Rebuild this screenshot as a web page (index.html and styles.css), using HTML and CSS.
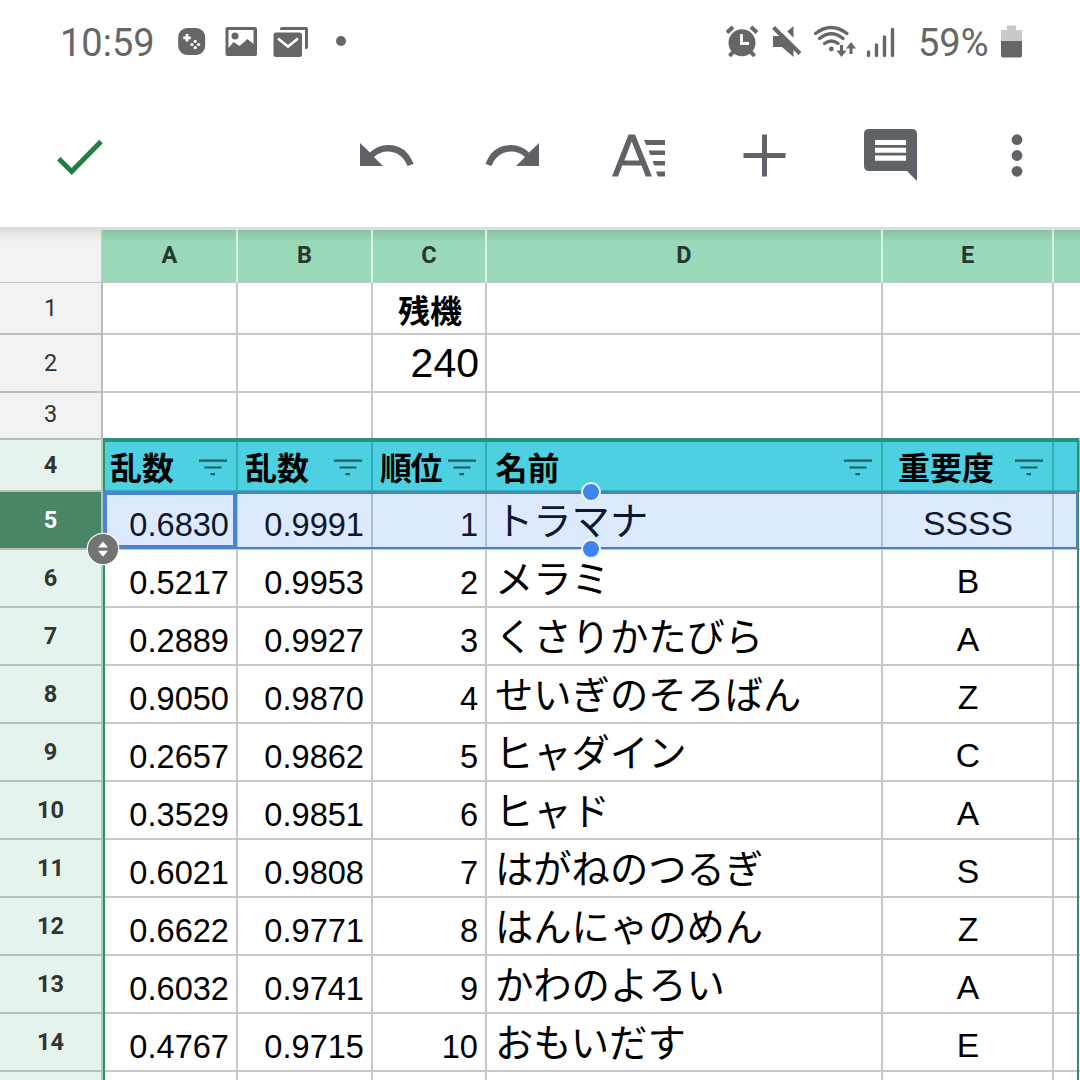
FILE: index.html
```html
<!DOCTYPE html>
<html lang="ja">
<head>
<meta charset="utf-8">
<title>Spreadsheet</title>
<link rel="stylesheet" href="styles.css">
</head>
<body>
<div class="screen">
  <header class="status">
    <div class="status-group">
      <span class="clock">10:59</span>
      <svg class="ic" width="28" height="34" viewBox="177.500 25 28 34"><rect x="177.700" y="28" width="27" height="27" rx="9"/><path class="cut-line" d="M186.500 34v7.500M182.800 37.800h7.500"/><g class="cut"><circle cx="194.700" cy="41.300" r="1.600"/><circle cx="191.400" cy="44.500" r="1.600"/><circle cx="198" cy="44.500" r="1.600"/><circle cx="194.700" cy="47.700" r="1.600"/></g></svg>
      <svg class="ic" width="32" height="34" viewBox="225 25 32 34"><rect x="225.500" y="27" width="31.500" height="29" rx="2"/><path class="cut" d="M228.500 30h25v14l-6-5-8 7-6-4-5 6z"/><circle cx="235" cy="36" r="3.500"/></svg>
      <svg class="ic mail" width="36" height="34" viewBox="273 25 36 34"><path d="M280 29q0-2 2-2h24q2 0 2 2v18q0 2-2 2h-1V30h-25z"/><rect x="273.500" y="32.500" width="28.500" height="24.500" rx="2.500"/><path class="cut-line" d="M278 38.500l10 8 10-8"/></svg>
      <svg class="ic dot" width="12" height="34" viewBox="335 25 12 34"><circle cx="341" cy="41" r="5"/></svg>
    </div>
    <div class="status-group status-right">
      <svg class="ic" width="34" height="34" viewBox="726 25 34 34"><circle cx="742" cy="42.700" r="13.500"/><path class="stroke4" d="M727 32.500l6-5.500M757 32.500l-6-5.500M734 51l-4.500 5M750 51l4.500 5"/><path class="cut-line" d="M741.500 34v9.500h7.500"/></svg>
      <svg class="ic" width="30" height="34" viewBox="773 25 30 34"><path d="M774 36h9l11.500-10v31l-11.500-10h-9z"/><path class="slash-gap" d="M776 23.500l30 30"/><path class="stroke4" d="M774.500 27.500l26.500 26"/></svg>
      <svg class="ic" width="43" height="34" viewBox="815 25 43 34"><path class="arc" d="M816.500 33.500q15.500-12 31.500 0M820.500 38.500q12-9.500 23.500 0M825.500 43.500q7-5 13.500 0"/><circle cx="832.300" cy="49" r="2.400"/><path class="stroke3" d="M842.500 45v9M852 45v9"/><path d="M837.500 50.500l5 6.500 5-6.500zM847 48.500l5-6.500 5 6.500z"/></svg>
      <svg class="ic signal" width="30" height="34" viewBox="867 25 30 34"><path class="bar" d="M869.500 52v3.500M877.500 45v10.500M885.500 37v18.500M893.500 29.500v26"/></svg>
      <span class="percent">59%</span>
      <svg class="ic" width="22" height="34" viewBox="1001 25 22 34"><path class="battery-empty" d="M1007 25.500h9v4.500h6v12h-21V30h6z"/><path d="M1001 41h21v14.500q0 2-2 2h-17q-2 0-2-2z"/></svg>
    </div>
  </header>

  <nav class="toolbar">
    <svg class="tool check" width="50" height="60" viewBox="55 126 50 60"><path d="M58.800 158.800L71.700 171.500 101 141.500"/></svg>
    <svg class="tool undo" width="56" height="60" viewBox="359 126 56 60"><path d="M360 143v23h23l-9-9q6-5.500 13.500-5.500 14 0 20 14.500l6-2q-7-19-25.500-19-10.500 0-18 7.500z"/></svg>
    <svg class="tool redo" width="56" height="60" viewBox="485 126 56 60"><path d="M539 143v23h-23l9-9q-6-5.500-13.500-5.500-14 0-20 14.500l-6-2q7-19 25.500-19 10.500 0 18 7.500z"/></svg>
    <svg class="tool format" width="56" height="60" viewBox="611 126 56 60"><path fill-rule="evenodd" d="M628.500 134.500h6.500l17 42h-6.200l-4.300-11h-19.300l-4.200 11h-6zM631.700 141.500l-7.300 19h14.800z"/><path d="M644 140h21v5h-18.800zM648.500 150.500H665v4.500h-14.700zM652.500 161H665v4.500h-10.700zM656 171.500h9v5h-7z"/></svg>
    <svg class="tool plus" width="46" height="60" viewBox="742 126 46 60"><path d="M762 134.500h5v18.500h18.500v5H767v18.500h-5V158h-18.500v-5H762z"/></svg>
    <svg class="tool comment" width="56" height="60" viewBox="863 126 56 60"><path d="M869 129h43q5 0 5 5v47l-10-10h-38q-5 0-5-5v-32q0-5 5-5z"/><path class="cut" d="M875 140h31v5h-31zM875 147.800h31v5h-31zM875 155.500h31v5.300h-31z"/></svg>
    <svg class="tool more" width="14" height="60" viewBox="1009.500 126 14 60"><circle cx="1016.500" cy="139.700" r="5.400"/><circle cx="1016.500" cy="155.500" r="5.400"/><circle cx="1016.500" cy="171.300" r="5.400"/></svg>
  </nav>

  <main class="sheet">
    <div class="row heads"><div class="corner"></div><div>A</div><div>B</div><div>C</div><div>D</div><div>E</div><div></div></div>
    <div class="row r1"><div class="num">1</div><div></div><div></div><div class="title">残機</div><div></div><div></div><div></div></div>
    <div class="row r2"><div class="num">2</div><div></div><div></div><div class="total">240</div><div></div><div></div><div></div></div>
    <div class="row r3"><div class="num">3</div><div></div><div></div><div></div><div></div><div></div><div></div></div>
    <div class="row r4">
      <div class="num on">4</div>
      <div class="field">乱数<svg class="filter" width="28" height="18" viewBox="0 0 28 18"><path d="M0 1.700h28M5.500 8.500h17M11.500 15.200h4.500"/></svg></div>
      <div class="field">乱数<svg class="filter" width="28" height="18" viewBox="0 0 28 18"><path d="M0 1.700h28M5.500 8.500h17M11.500 15.200h4.500"/></svg></div>
      <div class="field tight">順位<svg class="filter" width="28" height="18" viewBox="0 0 28 18"><path d="M0 1.700h28M5.500 8.500h17M11.500 15.200h4.500"/></svg></div>
      <div class="field wide">名前<svg class="filter" width="28" height="18" viewBox="0 0 28 18"><path d="M0 1.700h28M5.500 8.500h17M11.500 15.200h4.500"/></svg></div>
      <div class="field indent">重要度<svg class="filter" width="28" height="18" viewBox="0 0 28 18"><path d="M0 1.700h28M5.500 8.500h17M11.500 15.200h4.500"/></svg></div>
      <div class="field"></div>
    </div>
    <div class="row"><div class="num current">5</div><div class="val">0.6830</div><div class="val">0.9991</div><div class="val">1</div><div class="name">トラマナ</div><div class="rank">SSSS</div><div></div></div>
    <div class="row"><div class="num on">6</div><div class="val">0.5217</div><div class="val">0.9953</div><div class="val">2</div><div class="name">メラミ</div><div class="rank">B</div><div></div></div>
    <div class="row"><div class="num on">7</div><div class="val">0.2889</div><div class="val">0.9927</div><div class="val">3</div><div class="name">くさりかたびら</div><div class="rank">A</div><div></div></div>
    <div class="row"><div class="num on">8</div><div class="val">0.9050</div><div class="val">0.9870</div><div class="val">4</div><div class="name">せいぎのそろばん</div><div class="rank">Z</div><div></div></div>
    <div class="row"><div class="num on">9</div><div class="val">0.2657</div><div class="val">0.9862</div><div class="val">5</div><div class="name">ヒャダイン</div><div class="rank">C</div><div></div></div>
    <div class="row"><div class="num on">10</div><div class="val">0.3529</div><div class="val">0.9851</div><div class="val">6</div><div class="name">ヒャド</div><div class="rank">A</div><div></div></div>
    <div class="row"><div class="num on">11</div><div class="val">0.6021</div><div class="val">0.9808</div><div class="val">7</div><div class="name">はがねのつるぎ</div><div class="rank">S</div><div></div></div>
    <div class="row"><div class="num on">12</div><div class="val">0.6622</div><div class="val">0.9771</div><div class="val">8</div><div class="name">はんにゃのめん</div><div class="rank">Z</div><div></div></div>
    <div class="row"><div class="num on">13</div><div class="val">0.6032</div><div class="val">0.9741</div><div class="val">9</div><div class="name">かわのよろい</div><div class="rank">A</div><div></div></div>
    <div class="row"><div class="num on">14</div><div class="val">0.4767</div><div class="val">0.9715</div><div class="val">10</div><div class="name">おもいだす</div><div class="rank">E</div><div></div></div>
    <div class="row"><div class="num on"></div><div></div><div></div><div></div><div></div><div></div><div></div></div>

    <div class="filter-range"></div>
    <div class="selection"></div>
    <div class="active-cell"></div>
    <div class="handle handle-top"></div>
    <div class="handle handle-bottom"></div>
    <svg class="resizer" width="34" height="34" viewBox="0 0 34 34"><circle cx="17" cy="17" r="15.700"/><path d="M12 15.500l5-6 5 6zM12 18.800l5 6 5-6z"/></svg>
  </main>
</div>
</body>
</html>
```
FILE: styles.css
```css
* { box-sizing: border-box; }
body { margin: 0; background: #fff; }
svg { display: block; flex: none; }
.screen {
  width: 1080px;
  height: 1080px;
  overflow: hidden;
  display: flex;
  flex-direction: column;
  font-family: Roboto, sans-serif;
}

/* Status bar */
.status {
  flex: none;
  height: 86px;
  padding: 25px 57px 0 60px;
  display: flex;
  justify-content: space-between;
  color: #666;
}
.status-group { display: flex; align-items: flex-start; gap: 19px; }
.status-right { gap: 12px; }
.clock, .percent {
  font-size: 38px;
  line-height: 37px;
  font-weight: 400;
  white-space: nowrap;
}
.clock { width: 98.500px; }
.percent { width: 71px; margin-left: 10px; }
.mail { margin-left: -3px; }
.signal { margin-left: -3px; }
.dot { margin-left: 7px; }
.ic { fill: #666; stroke: none; }
.cut { fill: #fff; }
.cut-line { fill: none; stroke: #fff; stroke-width: 2.800; }
.stroke4 { fill: none; stroke: #666; stroke-width: 4; }
.stroke3 { fill: none; stroke: #666; stroke-width: 3; }
.slash-gap { stroke: #fff; stroke-width: 6; }
.arc { fill: none; stroke: #666; stroke-width: 3.200; stroke-linecap: round; }
.bar { stroke: #666; stroke-width: 3.400; stroke-linecap: round; }
.battery-empty { fill: #c9c9c9; }

/* Toolbar */
.toolbar {
  flex: none;
  height: 144px;
  padding: 40px 56.500px 0 55px;
  display: flex;
  border-bottom: 3px solid #dadedc;
}
.tool { fill: #5f6368; }
.check path { fill: none; stroke: #1e8140; stroke-width: 5; }
.undo { margin-left: 254px; }
.redo { margin-left: 70px; }
.format { margin-left: 70px; }
.plus { margin-left: 75px; }
.comment { margin-left: 75px; }
.more { margin-left: 90.500px; }
.tool .cut { fill: #fff; }

/* Sheet */
.sheet { position: relative; flex: none; }
.row {
  height: 58px;
  display: grid;
  grid-template-columns: 103px 135px 135px 114px 396px 171px 28px;
}
.row > div {
  border: solid #c8c8c8;
  border-width: 0 2px 2px 0;
  overflow: hidden;
  white-space: nowrap;
}
.heads { height: 53px; }
.heads > div {
  background: linear-gradient(rgba(0, 0, 0, .1), transparent 12px) #9ad8ba;
  border-color: #dcefe5;
  border-bottom: 1px solid #bfc9c4;
  color: #27382f;
  font-size: 23.500px;
  font-weight: 700;
  line-height: 50px;
  text-align: center;
}
.heads > .corner {
  background: linear-gradient(rgba(0, 0, 0, .07), transparent 12px) #f2f2f2;
  border-right-color: #9ad8ba;
}
.r1 { height: 52px; }
.r2 { height: 58px; }
.r3 { height: 47px; }
.r4 { height: 52px; }
.row > .num {
  display: flex;
  align-items: center;
  justify-content: center;
  background: #f2f2f2;
  border-color: #bcbcbc;
  color: #333;
  font-size: 23.500px;
}
.r3 > .num { padding-bottom: 3px; }
.row > .on {
  background: #e4f4ec;
  border-right-color: #9fd5b9;
  border-bottom-color: #b7c0bb;
  font-weight: 700;
}
.row > .current {
  background: #4a8566;
  border-right-color: #a9c9c0;
  color: #fff;
  font-weight: 700;
}
.title {
  font: 700 32px/50px "Noto Sans CJK JP", sans-serif;
  text-align: center;
  padding: 1px 0 0 2px;
}
.total {
  font: 41px/56px "Liberation Sans", sans-serif;
  text-align: right;
  padding: 0 6px 0 0;
}
.row > .field {
  display: flex;
  justify-content: space-between;
  padding: 1px 9px 0 7px;
  background: #4dd0e1;
  border-color: #36afb4;
  font: 700 32px/50px "Noto Sans CJK JP", sans-serif;
}
.row > .wide { padding-left: 8.500px; }
.row > .indent { padding-left: 15px; }
.row > .tight { letter-spacing: -1.500px; }
.filter { margin-top: 18px; fill: none; stroke: #145f60; stroke-width: 2.200; }
.val {
  font: 32.600px/56px "Liberation Sans", sans-serif;
  text-align: right;
  padding: 5px 7px 0 0;
}
.name {
  font: 38.300px/54px "Noto Sans CJK JP", sans-serif;
  padding-left: 8px;
}
.rank {
  font: 33.700px/56px "Liberation Sans", sans-serif;
  text-align: center;
  padding: 3px 0 0 1px;
}

/* Overlays on the grid */
.filter-range {
  position: absolute;
  left: 103px;
  top: 208px;
  width: 976px;
  height: 660px;
  border: 2px solid #3b8b67;
  border-top: 4px solid #22957b;
}
.selection {
  position: absolute;
  left: 103px;
  top: 261px;
  width: 975px;
  height: 58px;
  background: rgba(66, 133, 244, .18);
  border: solid #4a80ca;
  border-width: 3px 2px 2px;
}
.active-cell {
  position: absolute;
  left: 103px;
  top: 261px;
  width: 134px;
  height: 58px;
  border: 4px solid #4a82d4;
}
.handle {
  position: absolute;
  left: 581px;
  width: 20px;
  height: 20px;
  border-radius: 50%;
  border: 2.500px solid #f2faff;
  background: #3f83ee;
}
.handle-top { top: 252px; }
.handle-bottom { top: 309px; }
.resizer { position: absolute; left: 85.500px; top: 302px; }
.resizer circle { fill: #737373; stroke: #fff; stroke-width: 1.200; }
.resizer path { fill: #fff; }
```
